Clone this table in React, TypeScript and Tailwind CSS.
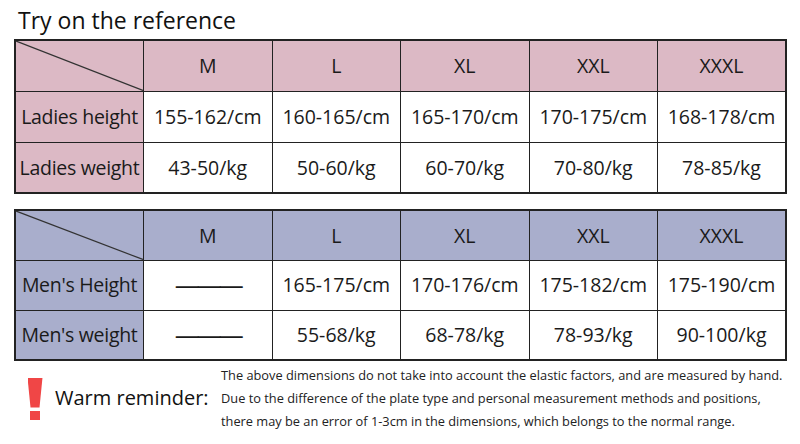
const sizes = ["M", "L", "XL", "XXL", "XXXL"];

type Row = { label: string; values: string[] };

const ladies: Row[] = [
  { label: "Ladies height", values: ["155-162/cm", "160-165/cm", "165-170/cm", "170-175/cm", "168-178/cm"] },
  { label: "Ladies weight", values: ["43-50/kg", "50-60/kg", "60-70/kg", "70-80/kg", "78-85/kg"] },
];

const men: Row[] = [
  { label: "Men's Height", values: ["———", "165-175/cm", "170-176/cm", "175-182/cm", "175-190/cm"] },
  { label: "Men's weight", values: ["———", "55-68/kg", "68-78/kg", "78-93/kg", "90-100/kg"] },
];

function SizeTable({ rows, tint, rowH }: { rows: Row[]; tint: string; rowH: string }) {
  return (
    <table className="w-[773px] table-fixed border-collapse border-2 border-[#222] text-[19.5px] text-[#1a1a1a]">
      <tbody>
        <tr className={rowH}>
          <td className={`relative border-[1.5px] border-[#222] p-0 ${tint}`}>
            <svg className="absolute inset-0 h-full w-full" preserveAspectRatio="none" viewBox="0 0 100 100">
              <line x1="0" y1="0" x2="100" y2="100" stroke="#333" strokeWidth="1.2" vectorEffect="non-scaling-stroke" />
            </svg>
          </td>
          {sizes.map((s) => (
            <td key={s} className={`border-[1.5px] border-[#222] text-center ${tint}`}>
              {s}
            </td>
          ))}
        </tr>
        {rows.map((r) => (
          <tr key={r.label} className={rowH}>
            <td className={`border-[1.5px] border-[#222] whitespace-nowrap text-center tracking-[-0.3px] ${tint}`}>
              {r.label}
            </td>
            {r.values.map((v, i) => (
              <td key={i} className="border-[1.5px] border-[#222] bg-white text-center whitespace-nowrap">
                {v === "———" ? <span className="text-[25px] tracking-[-3px]">———</span> : v}
              </td>
            ))}
          </tr>
        ))}
      </tbody>
    </table>
  );
}

export default function App() {
  return (
    <div
      className="h-[444px] w-[800px] bg-white pl-[14px]"
      style={{ fontFamily: '"Open Sans", "Noto Sans", sans-serif' }}
    >
      <h1 className="pt-[3px] pl-[4px] text-[23px] leading-[34px] font-medium text-[#111]">Try on the reference</h1>
      <div className="mt-[2px]">
        <SizeTable rows={ladies} tint="bg-[#dcb9c5]" rowH="h-[51px]" />
      </div>
      <div className="mt-[15px]">
        <SizeTable rows={men} tint="bg-[#a9aecc]" rowH="h-[50px]" />
      </div>
      <div className="mt-[3px] flex items-center">
        <div className="flex w-[40px] flex-col items-center pl-[2px]">
          <div className="h-[30px] w-[15px] bg-[#f04646] [clip-path:polygon(0_0,100%_0,80%_100%,20%_100%)]" />
          <div className="mt-[3px] h-[9px] w-[10px] bg-[#f04646]" />
        </div>
        <div className="ml-[1px] w-[166px] pb-[2px] text-[20px] text-[#111]">Warm reminder:</div>
        <div className="text-[12.8px] leading-[23px] text-[#222]">
          <div>The above dimensions do not take into account the elastic factors, and are measured by hand.</div>
          <div>Due to the difference of the plate type and personal measurement methods and positions,</div>
          <div>there may be an error of 1-3cm in the dimensions, which belongs to the normal range.</div>
        </div>
      </div>
    </div>
  );
}
